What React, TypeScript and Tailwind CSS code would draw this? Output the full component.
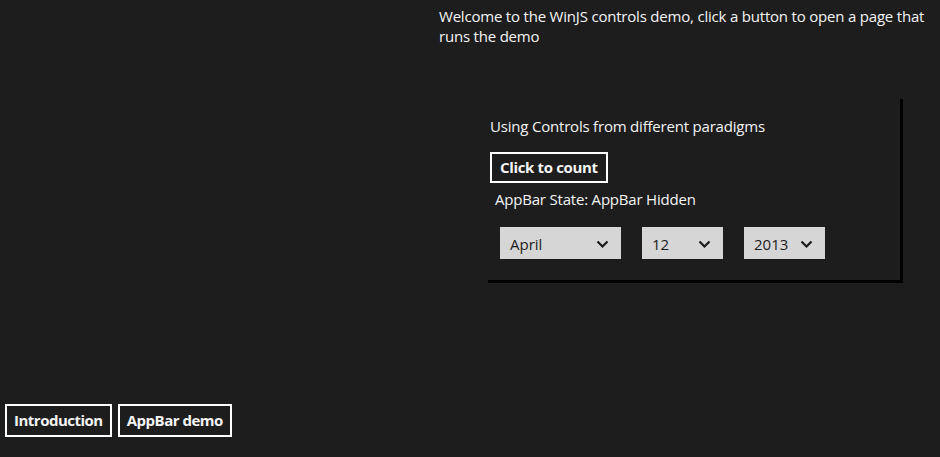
import React from "react";

function Chevron() {
  return (
    <svg width="13" height="9" viewBox="0 0 13 9" className="shrink-0">
      <path d="M1.5 1.5 L6.5 6.5 L11.5 1.5" fill="none" stroke="#1a1a1a" strokeWidth="2.2" />
    </svg>
  );
}

function Select({ value, width }: { value: string; width: string }) {
  return (
    <div className={`flex h-[32px] items-center justify-between bg-[#d6d6d6] pl-[10px] pr-[12px] pt-[2px] text-[15px] text-[#1c1c1c] ${width}`}>
      <span>{value}</span>
      <Chevron />
    </div>
  );
}

export default function App() {
  return (
    <div
      className="flex h-[457px] w-[940px] flex-col overflow-hidden bg-[#1d1d1d] text-[#f4f4f4]"
      style={{ fontFamily: '"Open Sans", "Noto Sans", sans-serif' }}
    >
      <p className="ml-[439px] mt-[6px] w-[495px] text-[15px] leading-[20px] tracking-[-0.2px]">
        Welcome to the WinJS controls demo, click a button to open a page that runs the demo
      </p>
      <div className="ml-[485px] mt-[50px] flex h-[184px] w-[415px] flex-col bg-[#1d1d1d] pl-[5px] pt-[20px] shadow-[3px_3px_0_0_#000]">
        <p className="text-[15px] leading-[20px] tracking-[-0.2px]">Using Controls from different paradigms</p>
        <div className="mt-[16px] flex">
          <button className="h-[31px] border-2 border-white px-[8px] text-[15px] font-bold leading-none tracking-[-0.35px]">
            Click to count
          </button>
        </div>
        <p className="ml-[5px] mt-[6px] text-[15px] leading-[20px] tracking-[-0.2px]">AppBar State: AppBar Hidden</p>
        <div className="ml-[10px] mt-[18px] flex gap-[21px]">
          <Select value="April" width="w-[121px]" />
          <Select value="12" width="w-[81px]" />
          <Select value="2013" width="w-[81px]" />
        </div>
      </div>
      <div className="mt-auto mb-[20px] ml-[5px] flex gap-[6px]">
        <button className="h-[33px] border-2 border-white px-[7px] text-[15px] font-bold tracking-[-0.5px]">Introduction</button>
        <button className="h-[33px] border-2 border-white px-[7px] text-[15px] font-bold tracking-[-0.5px]">AppBar demo</button>
      </div>
    </div>
  );
}
